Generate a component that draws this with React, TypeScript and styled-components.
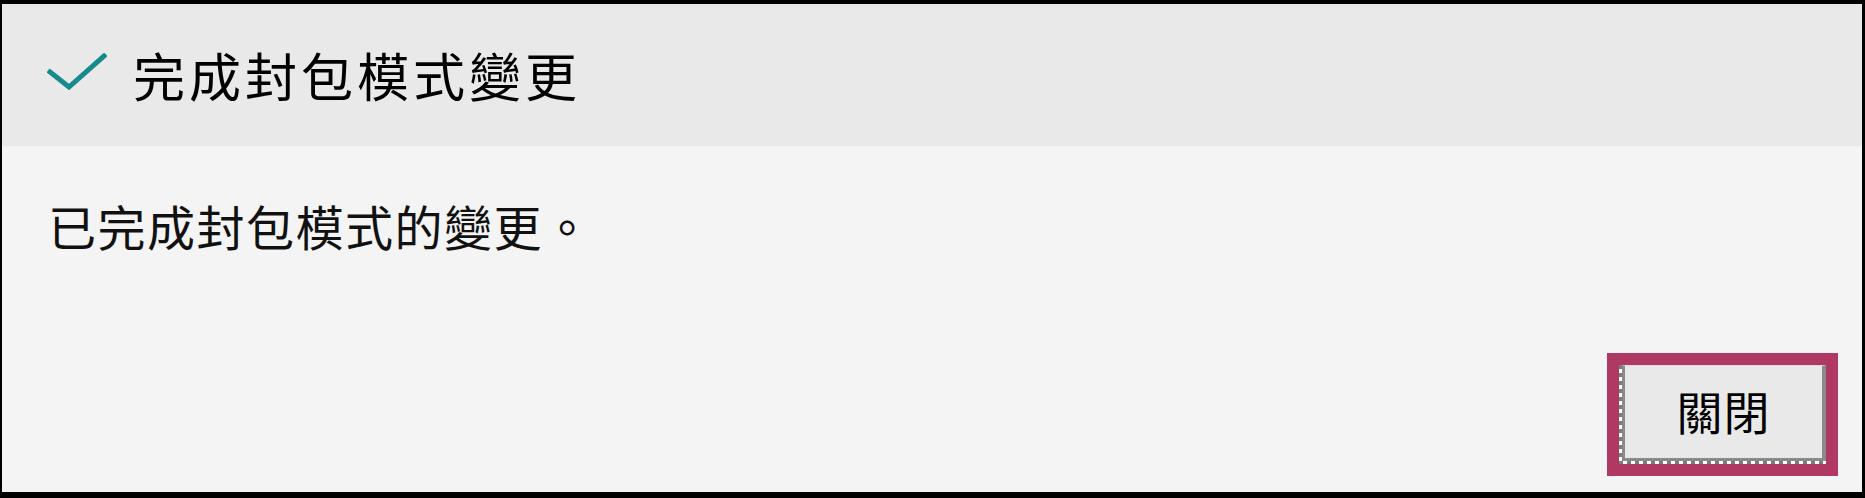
import React from "react";
import styled, { createGlobalStyle } from "styled-components";

const GlobalStyle = createGlobalStyle`
  html, body {
    margin: 0;
    padding: 0;
    background: #f4f4f4;
  }
  * {
    box-sizing: border-box;
  }
`;

const Dialog = styled.div`
  width: 1865px;
  height: 498px;
  display: flex;
  flex-direction: column;
  border-style: solid;
  border-color: #000;
  border-width: 4px 3px 6px 2px;
  background: #f4f4f4;
  font-family: "Noto Sans CJK TC", "Noto Sans", sans-serif;
  color: #111;
`;

const Header = styled.div`
  height: 142px;
  flex-shrink: 0;
  display: flex;
  align-items: center;
  padding-left: 45px;
  background: #e9e9e9;
`;

const CheckIcon = styled.svg`
  width: 60px;
  height: 40px;
  flex-shrink: 0;
  margin-top: -4px;
`;

const Title = styled.h1`
  margin: 0 0 0 26px;
  font-size: 52px;
  font-weight: 400;
  line-height: 52px;
  letter-spacing: 4px;
  color: #000;
`;

const Body = styled.div`
  flex: 1;
  display: flex;
  flex-direction: column;
  padding: 54px 24px 16px 46px;
`;

const Message = styled.p`
  margin: 0;
  font-size: 48px;
  line-height: 50px;
  letter-spacing: 1.5px;
  color: #111;
`;

const Footer = styled.div`
  margin-top: auto;
  display: flex;
  justify-content: flex-end;
`;

const Button = styled.button`
  width: 231px;
  height: 123px;
  padding: 0;
  border: 12px solid #b03964;
  background: #fff;
  cursor: pointer;
  font-family: inherit;
`;

/* checkered focus ring on the left and bottom edges */
const FocusRing = styled.span`
  display: block;
  width: 100%;
  height: 100%;
  padding: 0 0 3px 3px;
  background:
    repeating-linear-gradient(to bottom, #7a7a7a 0 4px, #fff 4px 8px) left top / 3px 100% no-repeat,
    repeating-linear-gradient(to right, #7a7a7a 0 4px, #fff 4px 8px) left bottom / 100% 3px no-repeat,
    #fff;
`;

const Face = styled.span`
  display: flex;
  align-items: center;
  justify-content: center;
  width: 100%;
  height: 100%;
  border-style: solid;
  border-color: #dcdcdc #8a8a8a #8a8a8a #8a8a8a;
  border-width: 1px 4px 3px 3px;
  background: #e9e9e9;
  font-size: 46px;
  line-height: 46px;
  letter-spacing: 1px;
  color: #000;
  padding-bottom: 4px;
`;

export default function App() {
  return (
    <>
      <GlobalStyle />
      <Dialog>
        <Header>
          <CheckIcon viewBox="0 0 60 40">
            <polyline
              points="3,19 22,34 57,3"
              fill="none"
              stroke="#178a8c"
              strokeWidth="5"
              strokeLinecap="square"
            />
          </CheckIcon>
          <Title>完成封包模式變更</Title>
        </Header>
        <Body>
          <Message>已完成封包模式的變更。</Message>
          <Footer>
            <Button>
              <FocusRing>
                <Face>關閉</Face>
              </FocusRing>
            </Button>
          </Footer>
        </Body>
      </Dialog>
    </>
  );
}
